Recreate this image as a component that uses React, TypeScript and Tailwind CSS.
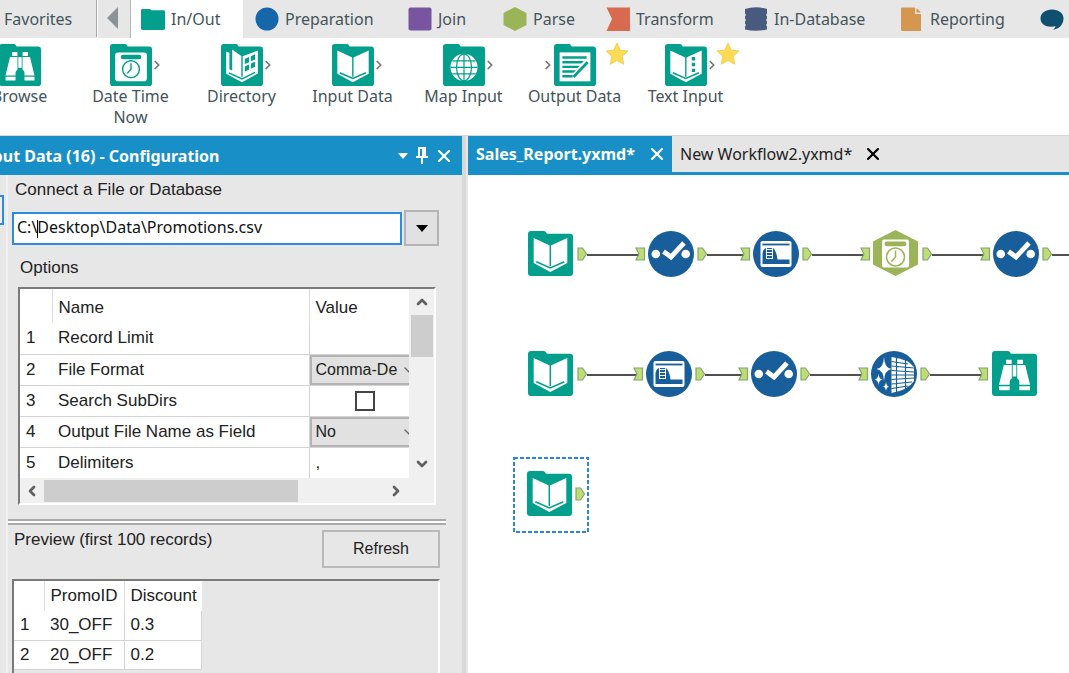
import type { ReactNode } from "react";
import { ChevronDown, ChevronLeft, ChevronRight, ChevronUp, X } from "lucide-react";

const TEAL = "#039f8d";
const BLUE = "#175e9a";
const GREEN = "#9bb458";

function Folder({ children, className }: { children?: ReactNode; className: string }) {
  return (
    <svg viewBox="0 0 45 45" preserveAspectRatio="none" className={className} aria-hidden="true">
      <path
        d="M3 0H16Q17.500 0 18.200 1.500L19 2.800H42Q45 2.800 45 6V42Q45 45 42 45H3Q0 45 0 42V3Q0 0 3 0Z"
        fill={TEAL}
      />
      {children}
    </svg>
  );
}

function Book() {
  return (
    <>
      <path d="M5.700 7L22.300 14.700L39.300 7V32L22.300 41L5.700 32Z" fill="#fff" />
      <path d="M22.300 14V35" stroke={TEAL} strokeWidth="1.500" />
      <path d="M8.300 30.800L22.300 37L36.300 30.800" stroke={TEAL} strokeWidth="1.600" fill="none" />
    </>
  );
}

function Binoculars() {
  return (
    <g fill="#fff">
      <path d="M14 8.700H19.700V12.900H14ZM25.300 8.700H31V12.900H25.300Z" />
      <path d="M11.800 14H19.800V27.500Q17.900 28.500 17.700 30.500V33.700H7Z" />
      <path d="M33.200 14H25.200V27.500Q27.100 28.500 27.300 30.500V33.700H38Z" />
      <path d="M20.700 14H24.300V25.500H20.700Z" />
      <path d="M7 35.200H17.700V39.200H7ZM27.300 35.200H38V39.200H27.300Z" />
    </g>
  );
}

function Clock({ color }: { color: string }) {
  return (
    <>
      <rect x="11.500" y="11.500" width="22" height="4.800" rx="2.400" fill={color} />
      <circle cx="22.500" cy="27" r="9" fill="none" stroke={color} strokeWidth="1.500" />
      <path d="M22.500 20.500V27L18.500 31.500" fill="none" stroke={color} strokeWidth="1.500" />
    </>
  );
}

function DateTimeIcon() {
  return (
    <>
      <rect x="5.500" y="9" width="34" height="31" rx="3" fill="#fff" />
      <Clock color={TEAL} />
    </>
  );
}

function DirectoryIcon() {
  return (
    <>
      <path d="M5.500 8L9 9.500V27L12 28.500V6L22.500 13.500L39.500 7V31.500L22.500 41L5.500 32Z" fill="#fff" />
      <path d="M22.500 13V35M8.500 31L22.500 37.500L36.500 30.500" stroke={TEAL} strokeWidth="1.500" fill="none" />
      <path d="M25.500 16L30 14V19.500L25.500 21.500ZM32 13L36.500 11V16.500L32 18.500ZM25.500 24L30 22V27.500L25.500 29.500ZM32 21L36.500 19V24.500L32 26.500Z" fill={TEAL} />
    </>
  );
}

function GlobeIcon() {
  return (
    <>
      <circle cx="22.500" cy="25" r="14.500" fill="#fff" />
      <g stroke={TEAL} strokeWidth="1.300" fill="none">
        <path d="M22.500 10V40M8 25H37M10 18H35M10 32H35" />
        <ellipse cx="22.500" cy="25" rx="8" ry="14.500" />
      </g>
    </>
  );
}

function OutputIcon() {
  return (
    <>
      <rect x="6" y="9" width="33" height="31" fill="#fff" />
      <path d="M9 14.500H35M9 19.500H33M9 24.500H28M9 29.500H24M9 34.500H20" stroke={TEAL} strokeWidth="2.600" />
      <path d="M22 34L36 17.500" stroke="#fff" strokeWidth="5.500" />
      <path d="M21 35.500L24.500 31.500L36 19.500" stroke={TEAL} strokeWidth="3" fill="none" />
    </>
  );
}

function TextInputIcon() {
  return (
    <>
      <Book />
      <path d="M30.500 14V30" stroke={TEAL} strokeWidth="3.600" strokeDasharray="3.600 2.600" />
    </>
  );
}

function SelectIcon() {
  return (
    <svg viewBox="0 0 46 46" className="size-[46px]" aria-hidden="true">
      <circle cx="23" cy="23" r="23" fill={BLUE} />
      <circle cx="7.800" cy="23" r="4.300" fill="#fff" />
      <circle cx="37.700" cy="23" r="4.300" fill="#fff" />
      <path d="M15.500 20.500L23 26L36 12" fill="none" stroke="#fff" strokeWidth="4.800" />
    </svg>
  );
}

function WindowIcon() {
  return (
    <svg viewBox="0 0 46 46" className="size-[46px]" aria-hidden="true">
      <circle cx="23" cy="23" r="23" fill={BLUE} />
      <rect x="7.500" y="10" width="31" height="26" rx="2" fill="#fff" />
      <path d="M9.500 13.500H36.500" stroke={BLUE} strokeWidth="1.800" />
      <path d="M9.500 33V22Q10.500 17 14 17H20Q23.500 20 24.500 28.500H36.500V33Z" fill={BLUE} />
      <path d="M13.500 15.500V28M19.500 15.500V28M13.500 18.500H19.500M13.500 21.500H19.500M13.500 24.500H19.500M13.500 27.500H19.500" stroke="#fff" strokeWidth="1" />
    </svg>
  );
}

function HexClockIcon() {
  return (
    <svg viewBox="0 0 45 46" className="h-[46px] w-[45px]" aria-hidden="true">
      <path d="M22.500 0L45 11.500V34.500L22.500 46L0 34.500V11.500Z" fill={GREEN} />
      <rect x="9" y="9.500" width="27" height="28" rx="2" fill="#fff" />
      <Clock color={GREEN} />
    </svg>
  );
}

function CleanseIcon() {
  return (
    <svg viewBox="0 0 46 46" className="size-[46px]" aria-hidden="true">
      <circle cx="23" cy="23" r="23" fill={BLUE} />
      <path d="M20.500 6Q37 8 43 16V30Q37 39 20.500 42Z" fill="#fff" />
      <path d="M20.500 10.500L37 13M20.500 15L43 17M20.500 19.500L43 21M20.500 24H43M20.500 28.500L43 27M20.500 33L41 31M20.500 37.500L37 35M25.500 6V42M34.500 8V40" stroke={BLUE} strokeWidth="1.200" />
      <path d="M13 6Q13.500 17 20.500 18Q13.500 19 13 30Q12.500 19 5.500 18Q12.500 17 13 6Z" fill="#fff" />
      <path d="M7.500 23Q8 28 11.500 28.500Q8 29 7.500 34Q7 29 3.500 28.500Q7 28 7.500 23Z" fill="#fff" />
      <path d="M15 31Q15.500 35 18 35.500Q15.500 36 15 40Q14.500 36 12 35.500Q14.500 35 15 31Z" fill="#fff" />
    </svg>
  );
}

const categories: { label: string; icon: ReactNode; width: string }[] = [
  { label: "Preparation", width: "w-[153px]", icon: <circle cx="12" cy="12" r="11.500" fill="#1667a9" /> },
  { label: "Join", width: "w-[95px]", icon: <rect x="0.500" y="0.500" width="23" height="23" rx="2" fill="#79549f" /> },
  { label: "Parse", width: "w-[103px]", icon: <path d="M12 0L23.500 6V18L12 24L0.500 18V6Z" fill="#9bb458" /> },
  { label: "Transform", width: "w-[138px]", icon: <path d="M0.500 0.500H24V24H0.500L6 12Z" fill="#d86a50" /> },
  {
    label: "In-Database",
    width: "w-[156px]",
    icon: (
      <path
        d="M1 2Q12 -1.500 23 2V6.500L22 8L23 9.500V11.500L22 13L23 14.500V16.500L22 18L23 19.500V22.500Q12 25 1 22.500V19.500L2 18L1 16.500V14.500L2 13L1 11.500V9.500L2 8L1 6.500Z"
        fill="#485a7e"
      />
    ),
  },
  {
    label: "Reporting",
    width: "w-[140px]",
    icon: (
      <>
        <path d="M2 0.500H15V7H21V24H2Q1 24 1 23V1.500Q1 0.500 2 0.500Z" fill="#d59650" />
        <path d="M16.500 1L21 5.500H16.500Z" fill="#d59650" />
      </>
    ),
  },
];

function Star() {
  return (
    <svg viewBox="0 0 24 24" className="absolute -top-[2px] left-[86px] size-6" aria-hidden="true">
      <path d="M12 1L15.200 8.200L23 9L17.200 14.200L18.800 22.200L12 18.500L5.200 22.200L6.800 14.200L1 9L8.800 8.200Z" fill="#fddb52" stroke="#f3cf5a" strokeWidth="1" />
    </svg>
  );
}

const tools: { label: string; icon: ReactNode; left?: boolean; right?: boolean; star?: boolean }[] = [
  { label: "Browse", icon: <Binoculars /> },
  { label: "Date Time Now", icon: <DateTimeIcon />, right: true },
  { label: "Directory", icon: <DirectoryIcon />, right: true },
  { label: "Input Data", icon: <Book />, right: true },
  { label: "Map Input", icon: <GlobeIcon />, right: true },
  { label: "Output Data", icon: <OutputIcon />, left: true, star: true },
  { label: "Text Input", icon: <TextInputIcon />, right: true, star: true },
];

function Ribbon() {
  return (
    <header className="shrink-0 overflow-hidden border-b border-[#d5d9dc] bg-white text-[#44545a]">
      <nav className="flex h-[38px] bg-[#e7e7e7] text-base">
        <button className="h-[37px] w-[97px] shrink-0 border-r border-[#a8a8a8] pl-1 text-left">Favorites</button>
        <button aria-label="Scroll tabs left" className="flex w-[34px] shrink-0 items-center justify-center border-r border-l border-r-[#b5b5b5] border-l-white pr-1 pb-[2px]">
          <svg viewBox="0 0 11 22" className="h-[22px] w-[11px]" aria-hidden="true">
            <path d="M11 0V22L0 11Z" fill="#8b9298" />
          </svg>
        </button>
        <button className="flex w-[112px] shrink-0 items-center gap-[6px] bg-white pl-[10px]">
          <Folder className="h-[21px] w-6" />
          In/Out
        </button>
        {categories.map((c) => (
          <button key={c.label} className={`flex shrink-0 items-center gap-[6px] pl-3 ${c.width}`}>
            <svg viewBox="0 0 24 24" className="size-6 shrink-0" aria-hidden="true">
              {c.icon}
            </svg>
            {c.label}
          </button>
        ))}
        <button aria-label="Documentation" className="flex shrink-0 items-center pl-3">
          <svg viewBox="0 0 24 24" className="size-6" aria-hidden="true">
            <path d="M12 2.500C18.500 2.500 23.500 6 23.500 11.500C23.500 18 19 21.500 13 23C14.500 21.500 15.300 20.500 15.500 19.300C7 21 0.500 17.500 0.500 11.500C0.500 6 5.500 2.500 12 2.500Z" fill="#10506f" />
          </svg>
        </button>
      </nav>
      <div className="-ml-9 flex h-[97px] pt-[6px]">
        {tools.map((t) => (
          <button key={t.label} className="relative flex w-[111px] shrink-0 flex-col items-center text-base leading-[21px]">
            <span className="relative">
              <Folder className="size-[42px]">{t.icon}</Folder>
              {t.left && <ChevronRight className="absolute top-[14px] -left-[13px] size-[14px] text-[#777]" strokeWidth={3} />}
              {t.right && <ChevronRight className="absolute top-[14px] -right-[12px] size-[14px] text-[#777]" strokeWidth={3} />}
            </span>
            {t.star && <Star />}
            <span className="w-[100px] text-center">{t.label}</span>
          </button>
        ))}
      </div>
    </header>
  );
}

function CellSelect({ label, value }: { label: string; value: string }) {
  return (
    <div className="relative h-[30px] overflow-hidden">
      <select aria-label={label} className="h-[30px] w-[120px] appearance-none border-2 border-[#b4b4b4] bg-[#e1e1e1] pl-1 text-base">
        <option>{value}</option>
      </select>
      <ChevronDown className="absolute top-[7px] -right-2 size-4 text-[#666]" />
    </div>
  );
}

const options: { name: string; value: ReactNode }[] = [
  { name: "Record Limit", value: null },
  { name: "File Format", value: <CellSelect label="File Format" value="Comma-De" /> },
  {
    name: "Search SubDirs",
    value: (
      <div className="flex justify-center pl-3">
        <input type="checkbox" aria-label="Search SubDirs" className="size-5 appearance-none border-2 border-[#444] bg-white" />
      </div>
    ),
  },
  { name: "Output File Name as Field", value: <CellSelect label="Output File Name as Field" value="No" /> },
  { name: "Delimiters", value: <span className="pl-[6px]">,</span> },
];

function OptionsGrid() {
  return (
    <div className="mt-[9px] mr-[26px] ml-[10px] border-2 border-t-[#7a7a7a] border-r-white border-b-white border-l-[#7a7a7a] bg-[#f0f0f0]">
      <div className="flex">
        <div className="min-w-0 flex-1">
          <table className="w-full table-fixed border-collapse bg-white text-left">
            <thead>
              <tr className="h-[34px]">
                <th className="w-8 border-r border-[#dcdcdc]" />
                <th className="border-r border-[#dcdcdc] p-0 pt-1 pl-[6px] font-normal">Name</th>
                <th className="w-[100px] p-0 pt-1 pl-[6px] font-normal">Value</th>
              </tr>
            </thead>
            <tbody>
              {options.map((o, i) => (
                <tr key={o.name} className="h-[31px] border-b border-[#d4d4d4] last:border-b-0">
                  <td className="p-0 pl-[6px]">{i + 1}</td>
                  <td className="border-r border-[#d4d4d4] p-0 pl-[6px]">{o.name}</td>
                  <td className="p-0">{o.value}</td>
                </tr>
              ))}
            </tbody>
          </table>
        </div>
        <div className="flex w-[25px] shrink-0 flex-col items-center">
          <ChevronUp className="my-[5px] size-4 text-[#606060]" strokeWidth={4} />
          <div className="h-[42px] w-[22px] bg-[#cdcdcd]" />
          <ChevronDown className="mt-auto mb-[6px] size-4 text-[#606060]" strokeWidth={4} />
        </div>
      </div>
      <div className="flex h-[25px] items-center pr-[30px]">
        <ChevronLeft className="mx-1 size-4 text-[#606060]" strokeWidth={4} />
        <div className="h-[22px] w-[254px] bg-[#cdcdcd]" />
        <ChevronRight className="ml-auto size-4 text-[#606060]" strokeWidth={4} />
      </div>
    </div>
  );
}

const preview = [
  ["30_OFF", "0.3"],
  ["20_OFF", "0.2"],
];

function ConfigPanel() {
  return (
    <aside className="flex w-[462px] shrink-0 flex-col overflow-hidden bg-[#e7e7e7]">
      <div className="flex h-[39px] shrink-0 items-center bg-[#1890c7] text-white">
        <h2 className="-ml-6 flex-1 text-base font-bold whitespace-nowrap">Input Data (16) - Configuration</h2>
        <button aria-label="Panel menu" className="mr-2">
          <svg viewBox="0 0 10 6" className="h-[6px] w-[10px]" aria-hidden="true">
            <path d="M0 0H10L5 6Z" fill="#fff" />
          </svg>
        </button>
        <button aria-label="Pin panel" className="mr-[6px]">
          <svg viewBox="0 0 12 17" className="h-[17px] w-3" aria-hidden="true">
            <path d="M2 0H10V9H12V11H7V17H5V11H0V9H2ZM4 2V9H6V2Z" fill="#fff" fillRule="evenodd" />
          </svg>
        </button>
        <button aria-label="Close panel" className="mr-2">
          <X className="size-5" strokeWidth={2.5} />
        </button>
      </div>
      <div className="flex min-h-0 flex-1 text-[17px] leading-5 text-[#222]">
        <div className="w-2 shrink-0 border-r-2 border-[#f0f0f0] pt-5">
          <div className="h-[30px] w-1 border-2 border-l-0 border-[#2f8be0] bg-[#eee]" />
        </div>
        <div className="min-w-0 flex-1 font-['Liberation_Sans',sans-serif]">
          <label htmlFor="path" className="block pt-[5px] pl-[7px]">
            Connect a File or Database
          </label>
          <div className="mt-[10px] mr-[23px] ml-1 flex items-center gap-[2px]">
            <div className="relative flex-1">
              <input
                id="path"
                defaultValue="C:\Desktop\Data\Promotions.csv"
                className="h-[33px] w-full border-2 border-[#2f8be0] bg-white px-[3px] pb-[2px] font-['Noto_Sans',sans-serif] text-base text-[#111] outline-none"
              />
              <span className="absolute top-2 left-[25px] h-[18px] w-px bg-black" />
            </div>
            <button aria-label="Browse connections" className="flex h-9 w-[35px] items-center justify-center border-2 border-[#b4b4b4] bg-[#e1e1e1]">
              <svg viewBox="0 0 12 7" className="h-[7px] w-3" aria-hidden="true">
                <path d="M0 0H12L6 7Z" fill="#000" />
              </svg>
            </button>
          </div>
          <h3 className="mt-3 pl-3">Options</h3>
          <OptionsGrid />
          <div className="mt-[14px] mr-4 h-[6px] border-y-2 border-[#a9a9a9] bg-white" />
          <div className="mt-[5px] mr-[22px] flex items-start justify-between pl-[6px]">
            <h3>Preview (first 100 records)</h3>
            <button className="h-[38px] w-[118px] border-2 border-[#b9b9b9] bg-[#e7e7e7] text-base">Refresh</button>
          </div>
          <div className="mt-[11px] mr-[22px] ml-1 h-[200px] border-2 border-t-[#7a7a7a] border-r-white border-b-white border-l-[#7a7a7a]">
            <table className="w-[188px] table-fixed border-collapse bg-white text-left">
              <thead>
                <tr className="h-[30px]">
                  <th className="w-[30px] border-r border-[#dcdcdc]" />
                  <th className="w-20 border-r border-[#dcdcdc] p-0 pl-[6px] font-normal">PromoID</th>
                  <th className="p-0 pl-[6px] font-normal">Discount</th>
                </tr>
              </thead>
              <tbody>
                {preview.map((r, i) => (
                  <tr key={r[0]} className="h-[29px] border-b border-[#d4d4d4]">
                    <td className="p-0 pl-[6px]">{i + 1}</td>
                    <td className="border-r border-[#d4d4d4] p-0 pl-[6px]">{r[0]}</td>
                    <td className="border-r border-[#d4d4d4] p-0 pl-[6px]">{r[1]}</td>
                  </tr>
                ))}
              </tbody>
            </table>
          </div>
        </div>
      </div>
    </aside>
  );
}

const InputNode = (
  <Folder className="size-[45px]">
    <Book />
  </Folder>
);

const BrowseNode = (
  <Folder className="size-[45px]">
    <Binoculars />
  </Folder>
);

/* Node positions are the top-left corners on the workflow canvas. */
const nodes: { x: number; y: number; icon: ReactNode }[] = [
  { x: 60, y: 56, icon: InputNode },
  { x: 180, y: 56, icon: <SelectIcon /> },
  { x: 285, y: 56, icon: <WindowIcon /> },
  { x: 405, y: 55, icon: <HexClockIcon /> },
  { x: 525, y: 56, icon: <SelectIcon /> },
  { x: 60, y: 176, icon: InputNode },
  { x: 178, y: 176, icon: <WindowIcon /> },
  { x: 283, y: 176, icon: <SelectIcon /> },
  { x: 403, y: 176, icon: <CleanseIcon /> },
  { x: 524, y: 176, icon: BrowseNode },
  { x: 59, y: 296, icon: InputNode },
];

const wires: { y: number; from: number; to: number | null }[] = [
  { y: 79, from: 110, to: 168 },
  { y: 79, from: 230, to: 273 },
  { y: 79, from: 335, to: 393 },
  { y: 79, from: 455, to: 513 },
  { y: 79, from: 575, to: 900 },
  { y: 199, from: 110, to: 166 },
  { y: 199, from: 228, to: 271 },
  { y: 199, from: 333, to: 391 },
  { y: 199, from: 453, to: 511 },
  { y: 319, from: 108, to: null },
];

function Wires() {
  return (
    <svg className="absolute inset-0 size-full" aria-hidden="true">
      {wires.map((w) => (
        <g key={`${w.y}-${w.from}`}>
          {w.to !== null && (
            <>
              <path d={`M${w.from + 9} ${w.y + 1}H${w.to + 3}`} stroke="#505050" strokeWidth="2" />
              <path
                d={`M${w.to} ${w.y - 6}h8.500v12h-8.500l3 -6Z`}
                fill="#c0dd74"
                stroke="#7fa678"
                strokeWidth="1.200"
              />
            </>
          )}
          <path
            d={`M${w.from} ${w.y - 6}h4.500l4 6l-4 6h-4.500Z`}
            fill="#c0dd74"
            stroke="#7fa678"
            strokeWidth="1.200"
          />
        </g>
      ))}
      <rect x="46" y="283" width="74" height="74" fill="none" stroke="#2a86d8" strokeWidth="2" strokeDasharray="4 2" />
    </svg>
  );
}

function Workspace() {
  return (
    <main className="flex min-w-0 flex-1 flex-col bg-white">
      <div className="flex h-[39px] shrink-0 border-b-[3px] border-[#1890c7] bg-[#e5e5e5] text-base">
        <div className="flex w-[204px] shrink-0 items-center justify-between bg-[#1890c7] pr-[5px] pl-2 font-bold text-white">
          <button>Sales_Report.yxmd*</button>
          <button aria-label="Close Sales_Report.yxmd">
            <X className="size-5" strokeWidth={2.5} />
          </button>
        </div>
        <div className="flex w-[218px] shrink-0 items-center justify-between pr-[7px] pl-2 text-[#222]">
          <button>New Workflow2.yxmd*</button>
          <button aria-label="Close New Workflow2.yxmd">
            <X className="size-5 text-black" strokeWidth={2.5} />
          </button>
        </div>
      </div>
      <div className="relative flex-1 overflow-hidden">
        <Wires />
        {nodes.map((n) => (
          <div key={`${n.x}-${n.y}`} className="absolute" style={{ left: n.x, top: n.y }}>
            {n.icon}
          </div>
        ))}
      </div>
    </main>
  );
}

export default function App() {
  return (
    <div className="flex h-screen flex-col overflow-hidden bg-white font-['Noto_Sans',sans-serif]">
      <Ribbon />
      <div className="flex min-h-0 flex-1">
        <ConfigPanel />
        <div className="w-[6px] shrink-0 border-r-2 border-[#e7e7e7] bg-[#d8d8d8]" />
        <Workspace />
      </div>
    </div>
  );
}
